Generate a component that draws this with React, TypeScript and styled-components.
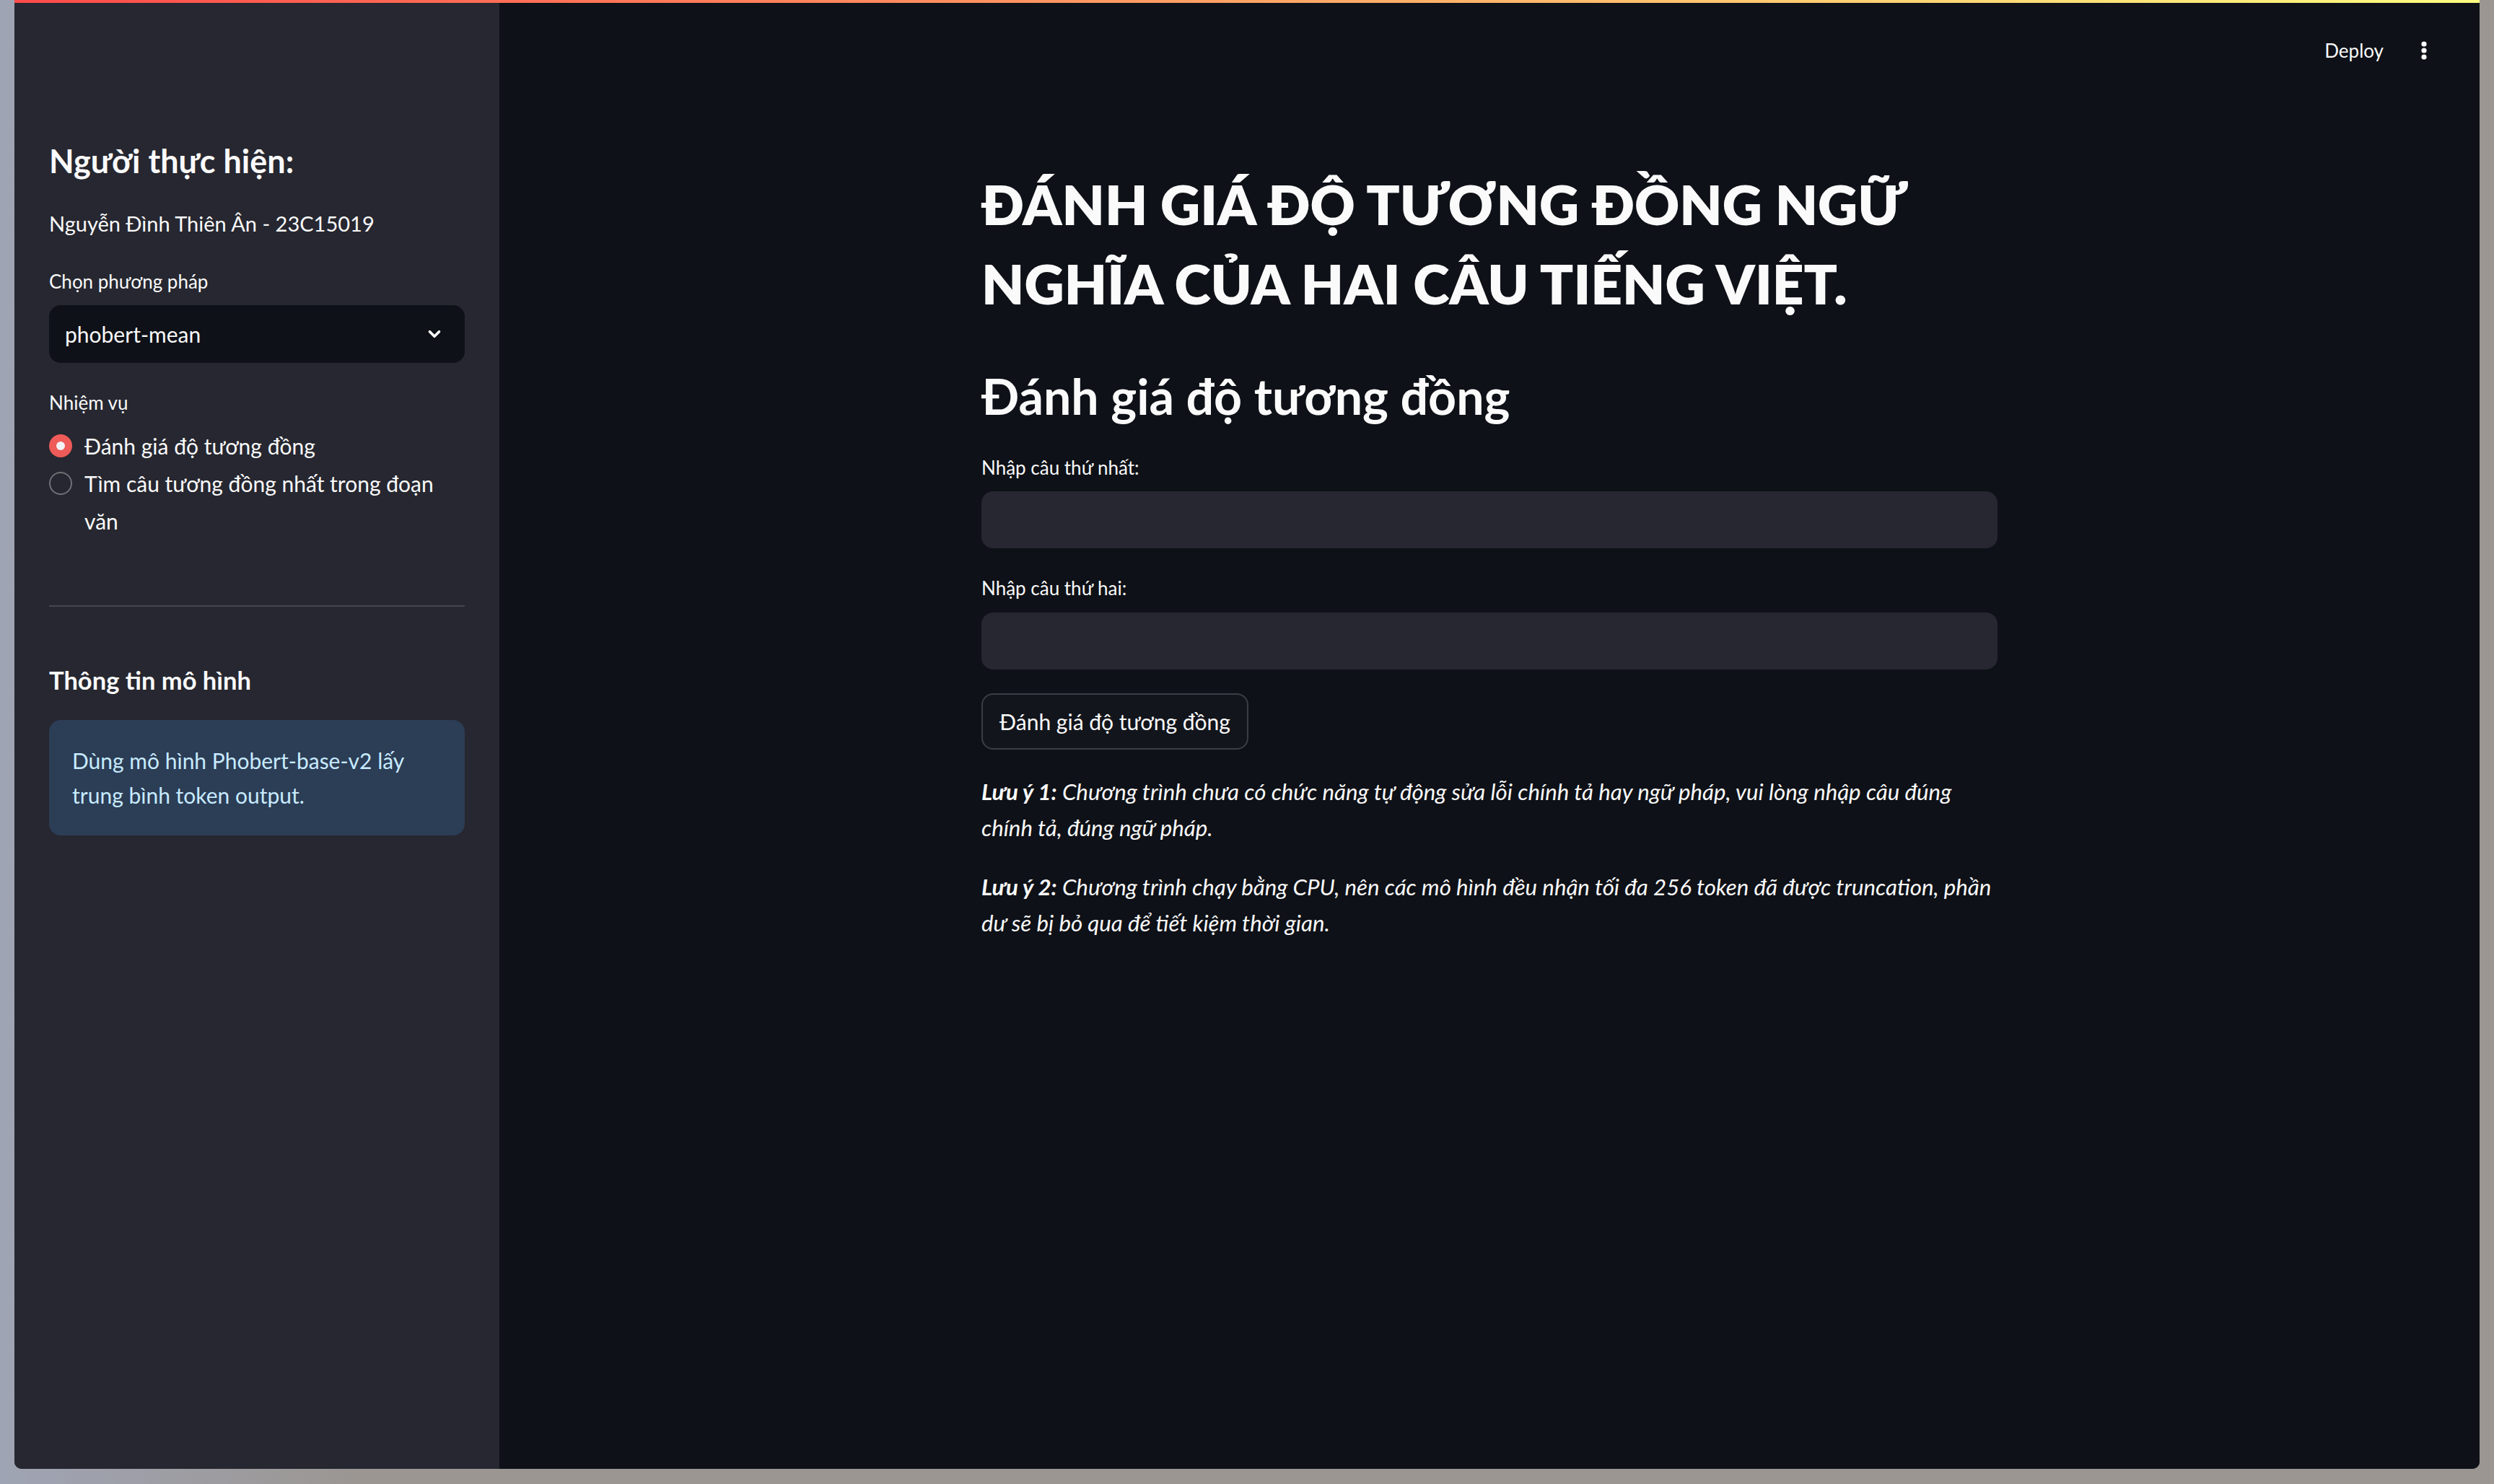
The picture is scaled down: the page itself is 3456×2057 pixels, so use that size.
import React from "react";
import styled, { createGlobalStyle } from "styled-components";

const FONT = `Lato, "Noto Sans", sans-serif`;

const GlobalStyle = createGlobalStyle`
  html, body { margin: 0; padding: 0; }
  body { background: #9b9692; font-family: ${FONT}; }
  * { box-sizing: border-box; }
`;

const Desktop = styled.div`
  width: 3456px;
  height: 2057px;
  display: flex;
  padding: 0 20px 21px 20px;
  background: linear-gradient(90deg, #9fa4b4 0, #9b9692 500px);
`;

const Window = styled.div`
  position: relative;
  flex: 1;
  display: flex;
  border-radius: 0 0 10px 10px;
  overflow: hidden;
  background: #0e1117;
  color: #fafafa;
`;

const Decoration = styled.div`
  position: absolute;
  top: 0;
  left: 0;
  right: 0;
  height: 4px;
  background: linear-gradient(90deg, #ff4b4b, #fffd80);
  z-index: 2;
`;

/* ---------- Sidebar ---------- */
const Sidebar = styled.aside`
  width: 672px;
  flex: none;
  background: #262730;
  padding: 194px 48px 0;
  display: flex;
  flex-direction: column;
`;

const SideTitle = styled.h2`
  margin: 0;
  font-size: 45px;
  line-height: 58px;
  font-weight: 700;
`;

const Author = styled.p`
  margin: 32px 0 0;
  font-size: 29px;
  line-height: 51px;
`;

const FieldLabel = styled.label<{ $top: number }>`
  display: block;
  margin-top: ${(p) => p.$top}px;
  font-size: 26px;
  line-height: 40px;
`;

const Select = styled.div`
  margin-top: 13px;
  height: 80px;
  border-radius: 16px;
  background: #0e1117;
  display: flex;
  align-items: center;
  justify-content: space-between;
  padding: 0 29px 0 22px;
  font-size: 30px;
`;

const RadioGroup = styled.div`
  margin-top: 14px;
  display: flex;
  flex-direction: column;
`;

const RadioItem = styled.div`
  display: flex;
  align-items: flex-start;
  gap: 17px;
  font-size: 30px;
  line-height: 52px;
`;

const RadioDot = styled.span<{ $on?: boolean }>`
  flex: none;
  width: 32px;
  height: 32px;
  margin-top: 10px;
  border-radius: 50%;
  display: flex;
  align-items: center;
  justify-content: center;
  background: ${(p) => (p.$on ? "#ee5b58" : "transparent")};
  border: ${(p) => (p.$on ? "none" : "2px solid #6f7076")};
  &::after {
    content: "";
    display: ${(p) => (p.$on ? "block" : "none")};
    width: 12px;
    height: 12px;
    border-radius: 50%;
    background: #f2f2f6;
  }
`;

const Divider = styled.hr`
  margin: 91px 0 0;
  border: none;
  height: 2px;
  background: #45464e;
`;

const SideSub = styled.h3`
  margin: 76px 0 0;
  font-size: 34.5px;
  line-height: 52px;
  font-weight: 700;
`;

const InfoBox = styled.div`
  margin-top: 29px;
  padding: 32px;
  border-radius: 16px;
  background: #2c3d56;
  color: #c7ebff;
  font-size: 30px;
  line-height: 48px;
`;

/* ---------- Main ---------- */
const Main = styled.main`
  flex: 1;
  display: flex;
  flex-direction: column;
  background: #0e1117;
`;

const Header = styled.header`
  height: 140px;
  display: flex;
  align-items: center;
  justify-content: flex-end;
  gap: 36px;
  padding-right: 57px;
`;

const DeployText = styled.span`
  font-size: 26px;
  line-height: 40px;
  color: #fafafa;
`;

const MenuButton = styled.span`
  width: 40px;
  height: 40px;
  display: flex;
  align-items: center;
  justify-content: center;
`;

const Content = styled.div`
  width: 1408px;
  margin: 0 auto;
  padding-top: 87px;
  display: flex;
  flex-direction: column;
`;

const Title = styled.h1`
  margin: 0;
  font-size: 76.5px;
  line-height: 110px;
  font-weight: 800;
`;

const Heading = styled.h2`
  margin: 59px 0 0;
  font-size: 68px;
  line-height: 86px;
  font-weight: 700;
`;

const TextInput = styled.input<{ $top: number }>`
  margin-top: ${(p) => p.$top}px;
  height: 79px;
  width: 100%;
  border: none;
  outline: none;
  border-radius: 16px;
  background: #262730;
  color: #fafafa;
  font-family: ${FONT};
  font-size: 30px;
  padding: 0 24px;
`;

const Button = styled.button`
  margin-top: 33px;
  align-self: flex-start;
  height: 78px;
  width: 370px;
  padding: 0;
  border: 2px solid #3c3e46;
  border-radius: 16px;
  background: #12151c;
  color: #fafafa;
  font-family: ${FONT};
  font-size: 30px;
`;

const Note = styled.p<{ $top: number }>`
  margin: ${(p) => p.$top}px 0 0;
  font-size: 31.2px;
  line-height: 50px;
  font-style: italic;
`;

const Chevron = () => (
  <svg width="26" height="26" viewBox="0 0 24 24" fill="none" stroke="#fafafa" strokeWidth="3.4" strokeLinecap="round" strokeLinejoin="round">
    <polyline points="6 9 12 15 18 9" />
  </svg>
);

const Dots = () => (
  <svg width="10" height="28" viewBox="0 0 10 28" fill="#fafafa">
    <circle cx="5" cy="5" r="3.6" />
    <circle cx="5" cy="14" r="3.6" />
    <circle cx="5" cy="23" r="3.6" />
  </svg>
);

export default function App() {
  return (
    <>
      <GlobalStyle />
      <Desktop>
        <Window>
          <Decoration />
          <Sidebar>
            <SideTitle>Người thực hiện:</SideTitle>
            <Author>Nguyễn Đình Thiên Ân - 23C15019</Author>
            <FieldLabel $top={35}>Chọn phương pháp</FieldLabel>
            <Select>
              <span>phobert-mean</span>
              <Chevron />
            </Select>
            <FieldLabel $top={35}>Nhiệm vụ</FieldLabel>
            <RadioGroup>
              <RadioItem>
                <RadioDot $on />
                <span>Đánh giá độ tương đồng</span>
              </RadioItem>
              <RadioItem>
                <RadioDot />
                <span>
                  Tìm câu tương đồng nhất trong đoạn
                  <br />
                  văn
                </span>
              </RadioItem>
            </RadioGroup>
            <Divider />
            <SideSub>Thông tin mô hình</SideSub>
            <InfoBox>
              Dùng mô hình Phobert-base-v2 lấy
              <br />
              trung bình token output.
            </InfoBox>
          </Sidebar>
          <Main>
            <Header>
              <DeployText>Deploy</DeployText>
              <MenuButton>
                <Dots />
              </MenuButton>
            </Header>
            <Content>
              <Title>
                ĐÁNH GIÁ ĐỘ TƯƠNG ĐỒNG NGỮ
                <br />
                NGHĨA CỦA HAI CÂU TIẾNG VIỆT.
              </Title>
              <Heading>Đánh giá độ tương đồng</Heading>
              <FieldLabel $top={36}>Nhập câu thứ nhất:</FieldLabel>
              <TextInput $top={13} />
              <FieldLabel $top={35}>Nhập câu thứ hai:</FieldLabel>
              <TextInput $top={14} />
              <Button>Đánh giá độ tương đồng</Button>
              <Note $top={33}>
                <strong>Lưu ý 1:</strong> Chương trình chưa có chức năng tự động sửa lỗi chính tả hay ngữ pháp, vui lòng nhập câu đúng
                <br />
                chính tả, đúng ngữ pháp.
              </Note>
              <Note $top={32}>
                <strong>Lưu ý 2:</strong> Chương trình chạy bằng CPU, nên các mô hình đều nhận tối đa 256 token đã được truncation, phần
                <br />
                dư sẽ bị bỏ qua để tiết kiệm thời gian.
              </Note>
            </Content>
          </Main>
        </Window>
      </Desktop>
    </>
  );
}
